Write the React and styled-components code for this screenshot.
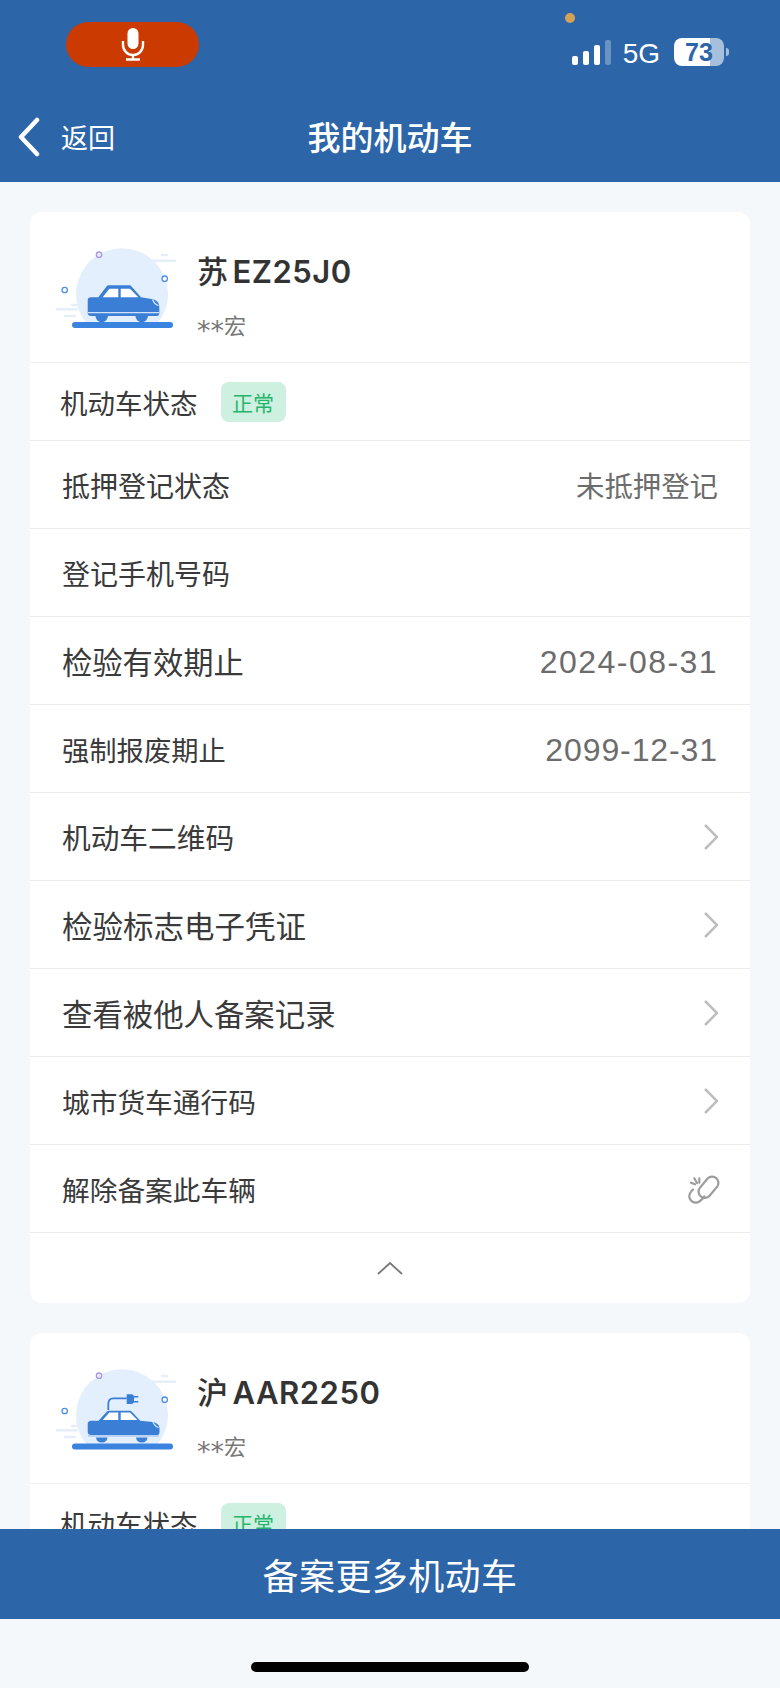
import styled, { createGlobalStyle } from "styled-components";

const CJK = `"Noto Sans CJK SC", "Noto Sans", sans-serif`;

const GlobalStyle = createGlobalStyle`
  html, body {
    margin: 0;
    padding: 0;
    background: #f4f8fa;
    font-family: ${CJK};
  }
  * { box-sizing: border-box; }
`;

const rows = [
  { label: "抵押登记状态", size: 28, value: "未抵押登记" },
  { label: "登记手机号码", size: 28 },
  { label: "检验有效期止", size: 30.3, value: "2024-08-31", num: true, track: 1.45 },
  { label: "强制报废期止", size: 27.3, value: "2099-12-31", num: true, track: 0.9 },
  { label: "机动车二维码", size: 28.7, arrow: true },
  { label: "检验标志电子凭证", size: 30.5, arrow: true },
  { label: "查看被他人备案记录", size: 30.4, arrow: true },
  { label: "城市货车通行码", size: 27.7, arrow: true },
  { label: "解除备案此车辆", size: 27.7, unlink: true },
];

const Chevron = () => (
  <svg width="16" height="28" viewBox="0 0 16 28" fill="none">
    <path d="M3 2l12 12L3 26" stroke="#bebebe" strokeWidth="2.5" />
  </svg>
);

const UnlinkIcon = () => (
  <svg width="34" height="32" viewBox="-2 0 34 32" overflow="visible" fill="none" stroke="#9c9c9c" strokeWidth="2.200" strokeLinecap="round">
    <rect x="10.500" y="8" width="24" height="12.500" rx="6.250" transform="rotate(-50 22.500 14.250)" />
    <path d="M7 16.500c-2.500 2.500-4.200 5-3.700 7.500.6 3.200 3.500 5.700 6.500 5.700 3.500 0 6-2.800 8.500-6.200" />
    <path d="M5 9.700l4 1.600M8.300 5.300L11 10M13.300 5.300v4.400" />
  </svg>
);

const CaretUp = () => (
  <svg width="26" height="14" viewBox="0 0 26 14" fill="none">
    <path d="M1 13L13 2l12 11" stroke="#777" strokeWidth="1.8" />
  </svg>
);

const Sedan = () => (
  <g>
    <path
      d="M35 49.300h7.300l8-10.500c.8-1 1.500-1.500 3-1.500h19.500c1.300 0 2 .4 3 1.500l9.200 10.500 12 2c3.500 1 6.300 3.500 6.300 7.400V65c0 1.500-.5 3-2.500 3H35c-2 0-3.300-1.200-3.300-3V52.500c0-2 1.300-3.200 3.300-3.200z"
      fill="#3a7fd5"
    />
    <path d="M46.700 49.300l6.600-8.600h9v8.600zM64.700 40.700H74l8.300 8.600H64.700z" fill="#fff" />
    <path d="M96.500 51.500c1 2.500 2.500 5 6 6" stroke="#dce9fa" strokeWidth="1.200" />
    <path d="M32 64.700h71" stroke="#cfe0f7" strokeWidth="1.200" />
    <path d="M39.500 68a6.200 6.200 0 0 0 12.400 0zM79.500 68a6.200 6.200 0 0 0 12.400 0z" fill="#3a7fd5" />
  </g>
);

const PlugSedan = () => (
  <g>
    <path d="M52.300 41v-6c0-3.500 2-5.700 5-5.700h13.400" stroke="#3a7fd5" strokeWidth="1.800" />
    <path d="M70.700 25.300h4.800c1.500 0 2.500 1 2.500 2.500v4.700c0 1.500-1 2.500-2.500 2.500h-4.800z" fill="#3a7fd5" />
    <path d="M78 27.700h4.300M78 32.700h4.300" stroke="#3a7fd5" strokeWidth="1.600" />
    <path
      d="M35 51.700h7.500l7.800-8.500c.8-1 1.500-1.500 3-1.500h20c1.300 0 2 .4 3 1.500l8 8.500 12.500 1.300c3.800.8 6.700 3 6.700 6.500V63c0 1.800-.8 3-2.500 3H35c-2 0-3.300-1.200-3.300-3v-8c0-2 1.300-3.300 3.300-3.300z"
      fill="#3a7fd5"
    />
    <path d="M46.700 51l6.600-7.600h9V51zM64.700 43.400H74l7.500 7.600H64.700z" fill="#fff" />
    <path d="M97 53c1 2.500 2.500 4.500 5.500 5.500" stroke="#dce9fa" strokeWidth="1.200" />
    <path d="M40 68.500h11.500a5.800 5.800 0 0 1-11.500 0zM80 68.500h11.500a5.800 5.800 0 0 1-11.500 0z" fill="#3a7fd5" />
    <path d="M32 67h71" stroke="#b9d3f3" strokeWidth="2" />
  </g>
);

// 车辆插画，plug 为新能源车
const CarArt = ({ plug }) => (
  <svg width="122" height="84" viewBox="0 0 122 84" fill="none">
    <path d="M31 76A46 46 0 1 1 101 76z" fill="#e4effd" />
    <g stroke="#e6eef9" strokeWidth="2.400" strokeLinecap="round">
      <path d="M106 7h5M97 12.700h22" />
      <path d="M1 61.300h20M16 57h6M9 68h10" />
    </g>
    <circle cx="43" cy="6.700" r="2.700" stroke="#a69bea" strokeWidth="1.300" fill="#f0edff" />
    <circle cx="108.700" cy="30.700" r="2.700" stroke="#4f8fe6" strokeWidth="1.300" fill="#fff" />
    <circle cx="8.700" cy="42" r="2.700" stroke="#4f8fe6" strokeWidth="1.300" fill="#fff" />
    {plug ? <PlugSedan /> : <Sedan />}
    <rect x="16" y={plug ? 74.500 : 74} width="101" height="6" rx="3" fill="#3a84e0" />
  </svg>
);

const VehicleCard = ({ plate, region, plug, items }) => (
  <Card>
    <CardHead>
      <ArtSlot><CarArt plug={plug} /></ArtSlot>
      <HeadText>
        <Plate><Region>{region}</Region>{plate}</Plate>
        <Owner><Stars>**</Stars>宏</Owner>
      </HeadText>
    </CardHead>
    <StatusRow>
      <StatusLabel>机动车状态</StatusLabel>
      <Badge>正常</Badge>
    </StatusRow>
    {items.map((r) => (
      <Row key={r.label}>
        <RowLabel $size={r.size}>{r.label}</RowLabel>
        {r.value && <RowValue $num={r.num} $track={r.track}>{r.value}</RowValue>}
        {r.arrow && <Chevron />}
        {r.unlink && <UnlinkIcon />}
      </Row>
    ))}
    {items.length > 0 && (
      <Collapse><CaretUp /></Collapse>
    )}
  </Card>
);

export default function App() {
  return (
    <Screen>
      <GlobalStyle />
      <Header>
        <StatusBar>
          <MicPill>
            <svg width="24" height="33" viewBox="0 0 24 33" fill="none">
              <rect x="6.500" y="0" width="11" height="21" rx="5.500" fill="#fff" />
              <path d="M2 13v4c0 5.500 4.500 10 10 10s10-4.500 10-10v-4M12 27v5M5 31.500h14" stroke="#fff" strokeWidth="2.400" />
            </svg>
          </MicPill>
          <Dot />
          <Indicators>
            <Signal>
              <Bar $h={9} />
              <Bar $h={14} />
              <Bar $h={20} />
              <Bar $h={25} $dim />
            </Signal>
            <Net>5G</Net>
            <Battery>
              <BatteryNum>73</BatteryNum>
            </Battery>
            <BatteryTip />
          </Indicators>
        </StatusBar>
        <NavBar>
          <BackBtn>
            <svg width="24" height="40" viewBox="0 0 24 40" fill="none">
              <path d="M20 3L4 20l16 17" stroke="#fff" strokeWidth="4.500" strokeLinecap="round" strokeLinejoin="round" />
            </svg>
            <BackText>返回</BackText>
          </BackBtn>
          <Title>我的机动车</Title>
        </NavBar>
      </Header>
      <List>
        <VehicleCard region="苏" plate="EZ25J0" items={rows} />
        <VehicleCard region="沪" plate="AAR2250" plug items={[]} />
      </List>
      <BottomArea>
        <AddBtn>备案更多机动车</AddBtn>
        <HomeZone><HomeBar /></HomeZone>
      </BottomArea>
    </Screen>
  );
}

const Screen = styled.div`
  position: relative;
  width: 780px;
  height: 1688px;
  overflow: hidden;
  background: #f4f8fa;
`;

const Header = styled.header`
  height: 182px;
  background: #2c65a8;
  color: #fff;
`;

const StatusBar = styled.div`
  height: 100px;
  display: flex;
  align-items: flex-start;
  justify-content: space-between;
  padding: 22px 51px 0 66px;
  position: relative;
`;

const MicPill = styled.div`
  width: 133px;
  height: 45px;
  border-radius: 23px;
  background: #cb3a00;
  display: flex;
  align-items: center;
  justify-content: center;
`;

const Dot = styled.span`
  position: absolute;
  left: 565px;
  top: 13px;
  width: 10px;
  height: 10px;
  border-radius: 50%;
  background: #d3a257;
`;

const Indicators = styled.div`
  display: flex;
  align-items: center;
  height: 28px;
  margin-top: 16px;
`;

const Signal = styled.div`
  display: flex;
  align-items: flex-end;
  gap: 5px;
  height: 25px;
`;

const Bar = styled.span`
  width: 6px;
  height: ${(p) => p.$h}px;
  border-radius: 2px;
  background: ${(p) => (p.$dim ? "#6a92c3" : "#fff")};
`;

const Net = styled.span`
  margin-left: 12px;
  padding-top: 3px;
  font: 400 28px/1 "Liberation Sans", sans-serif;
`;

const Battery = styled.div`
  width: 50px;
  height: 28px;
  margin-left: 14px;
  border-radius: 8px;
  background: linear-gradient(90deg, #fff 72%, #a5bfdd 72%);
  display: flex;
  align-items: center;
  justify-content: center;
`;

const BatteryNum = styled.span`
  font: 700 25px/1 "Liberation Sans", sans-serif;
  color: #2c65a8;
`;

const BatteryTip = styled.span`
  width: 3px;
  height: 8px;
  margin-left: 2px;
  border-radius: 0 4px 4px 0;
  background: #a5bfdd;
`;

const NavBar = styled.div`
  height: 82px;
  position: relative;
  display: flex;
  align-items: center;
  justify-content: center;
  padding-bottom: 11px;
`;

const BackBtn = styled.div`
  position: absolute;
  left: 17px;
  top: 17px;
  display: flex;
  align-items: center;
  gap: 20px;
`;

const BackText = styled.span`
  font-size: 27px;
  line-height: 40px;
`;

const Title = styled.h1`
  margin: 0;
  font-size: 33px;
  font-weight: 500;
  line-height: 44px;
`;

const List = styled.main`
  padding: 30px 30px 0;
  display: flex;
  flex-direction: column;
  gap: 30px;
`;

const Card = styled.section`
  background: #fff;
  border-radius: 12px;
  flex-shrink: 0;
`;

const CardHead = styled.div`
  height: 151px;
  display: flex;
  border-bottom: 1px solid #f1f1f1;
`;

const ArtSlot = styled.div`
  width: 167px;
  padding: 36px 0 0 26px;
`;

const HeadText = styled.div`
  padding-top: 36px;
`;

const Plate = styled.div`
  font: 600 31px/44px Inter, ${CJK};
  color: #333;
  letter-spacing: 0.5px;
`;

const Region = styled.span`
  font-family: ${CJK};
  font-weight: 500;
  margin-right: 4px;
`;

const Owner = styled.div`
  margin-top: 16px;
  font: 400 22px/28px ${CJK};
  color: #777;
`;

const Stars = styled.span`
  font: 400 27px/1 "DejaVu Sans", sans-serif;
  vertical-align: -6px;
`;

const StatusRow = styled.div`
  height: 78px;
  display: flex;
  align-items: center;
  padding-left: 30px;
  border-bottom: 1px solid #ececec;
`;

const StatusLabel = styled.span`
  font-size: 27.5px;
  color: #3a3a3a;
`;

const Badge = styled.span`
  width: 65px;
  height: 40px;
  margin-left: 23px;
  border-radius: 8px;
  background: #cef0e0;
  color: #26b56c;
  font-size: 21px;
  display: flex;
  align-items: center;
  justify-content: center;
`;

const Row = styled.div`
  height: 88px;
  display: flex;
  align-items: center;
  justify-content: space-between;
  padding: 0 32px;
  border-bottom: 1px solid #ececec;
`;

const RowLabel = styled.span`
  font-size: ${(p) => p.$size}px;
  color: #3a3a3a;
`;

const RowValue = styled.span`
  font: 400 ${(p) => (p.$num ? `32px/1 "Liberation Sans", ${CJK}` : `28.4px/1 ${CJK}`)};
  padding-top: ${(p) => (p.$num ? 3 : 2)}px;
  color: #6c6c6c;
  letter-spacing: ${(p) => p.$track || 0}px;
`;

const Collapse = styled.div`
  height: 70px;
  display: flex;
  align-items: center;
  justify-content: center;
`;

const BottomArea = styled.div`
  position: absolute;
  left: 0;
  right: 0;
  bottom: 0;
`;

const AddBtn = styled.div`
  height: 90px;
  background: #2c65a8;
  color: #fff;
  font-size: 36px;
  letter-spacing: 0.4px;
  display: flex;
  align-items: center;
  justify-content: center;
`;

const HomeZone = styled.div`
  height: 69px;
  background: #f4f8fa;
  display: flex;
  justify-content: center;
  padding-top: 43px;
`;

const HomeBar = styled.span`
  width: 278px;
  height: 10px;
  border-radius: 5px;
  background: #000;
`;
